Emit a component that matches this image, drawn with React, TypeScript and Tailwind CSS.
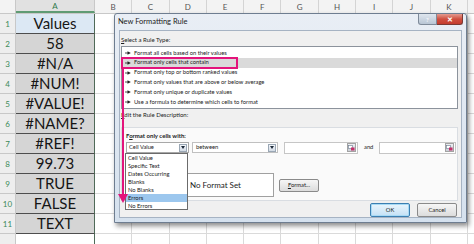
import React from 'react';

const sheetCols = ['B', 'C', 'D', 'E', 'F', 'G', 'H', 'I', 'J', 'K', ''];
const cellValues = ['Values', '58', '#N/A', '#NUM!', '#VALUE!', '#NAME?', '#REF!', '99.73', 'TRUE', 'FALSE', 'TEXT', ''];

const ruleTypes = [
    'Format all cells based on their values',
    'Format only cells that contain',
    'Format only top or bottom ranked values',
    'Format only values that are above or below average',
    'Format only unique or duplicate values',
    'Use a formula to determine which cells to format',
];

const dropOptions = ['Cell Value', 'Specific Text', 'Dates Occurring', 'Blanks', 'No Blanks', 'Errors', 'No Errors'];

const Bullet: React.FC = () => (
    <svg width="6" height="4" viewBox="0 0 6 4" className="shrink-0">
        <line x1="0" y1="2" x2="3" y2="2" stroke="#222" strokeWidth="0.8" />
        <polygon points="2.5,0.3 5.8,2 2.5,3.7" fill="#222" />
    </svg>
);

const DropArrow: React.FC = () => (
    <div className="w-[8px] h-[8px] my-auto mr-[1px] border border-[#9aa7b5] bg-gradient-to-b from-[#f2f5f9] to-[#d3dbe5] flex items-center justify-center">
        <svg width="4" height="3" viewBox="0 0 4 3">
            <polygon points="0,0 4,0 2,3" fill="#1d2a3a" />
        </svg>
    </div>
);

const PickerIcon: React.FC = () => (
    <div className="w-[9px] h-[9px] my-auto mr-[1px] border border-[#a3a3a3] bg-gradient-to-b from-[#eef0f3] to-[#c9ced6] flex items-center justify-center">
        <svg width="7" height="6" viewBox="0 0 7 6">
            <rect x="0.5" y="0.5" width="4" height="3" fill="#fff" stroke="#6a7a8f" strokeWidth="0.6" />
            <rect x="3" y="2.5" width="3.5" height="3" fill="#c2306a" />
        </svg>
    </div>
);

const Sheet: React.FC = () => (
    <div className="flex flex-col">
        {/* column headers */}
        <div className="flex h-[14px] bg-[#f3f3f3] border-b border-[#c8c8c8]">
            <div className="w-[16px] shrink-0 border-r border-[#c8c8c8]" />
            <div className="w-[79px] shrink-0 flex items-center justify-center bg-[#e1e1e1] border-r border-[#c8c8c8] border-b-2 border-b-[#5f9b74] text-[8px] text-[#2f7a4a]">A</div>
            {sheetCols.map((c, i) => (
                <div key={i} className="w-[37.3px] shrink-0 flex items-center justify-center border-r border-[#d4d4d4] text-[8px] text-[#555]">{c}</div>
            ))}
        </div>
        {/* rows */}
        {cellValues.map((v, i) => (
            <div key={i} className="flex h-[20px]">
                <div className="w-[16px] shrink-0 flex items-center justify-center bg-[#eeeeee] border-r border-b border-[#c8c8c8] text-[8px] text-[#3b8a59]">{i < 11 ? i + 1 : ''}</div>
                <div className={`w-[79px] shrink-0 flex items-center justify-center text-[15px] leading-none text-[#161616] border-r border-[#4f6a58] ${i === 11 ? 'bg-white border-b border-b-[#d9d9d9]' : 'border-b border-b-[#4d4d4d]'} ${i === 0 ? 'bg-[#dce8f4]' : i < 11 ? 'bg-[#d5d5d5]' : ''}`}>
                    {v}
                </div>
                {sheetCols.map((c, j) => (
                    <div key={j} className="w-[37.3px] shrink-0 border-r border-b border-[#dadada]" />
                ))}
            </div>
        ))}
    </div>
);

const FormattingDialog: React.FC = () => (
    <div className="absolute left-[114px] top-[13px] w-[353px] h-[210px] flex flex-col rounded-t-[3px] border border-[#6e7d90] bg-gradient-to-b from-[#e9eef5] to-[#d5e1ee] shadow-[2px_3px_5px_rgba(0,0,0,0.45)]">
        {/* title bar */}
        <div className="h-[17px] flex items-start justify-between pl-[3px]">
            <span className="mt-[4px] text-[7.5px] leading-[8px] text-[#1b1b1b]">New Formatting Rule</span>
            <div className="flex mr-[3px]">
                <div className="w-[19px] h-[11px] flex items-center justify-center rounded-bl-[3px] border border-t-0 border-[#7e8a99] bg-gradient-to-b from-[#dfe6ee] to-[#b9c6d5] text-[6px] font-bold text-[#f7f9fb]">?</div>
                <div className="w-[26px] h-[11px] flex items-center justify-center rounded-br-[3px] border border-t-0 border-l-0 border-[#7a3a34] bg-gradient-to-b from-[#e39a90] via-[#cf4f40] to-[#c43c2e] text-[7px] font-bold text-white">✕</div>
            </div>
        </div>

        {/* client area */}
        <div className="mx-[4px] mb-[4px] flex-1 flex flex-col bg-[#f0f0f0] border border-[#a6b3c3] pl-[1px] pr-[3px]">
            <div className="mt-[5px] h-[8px] text-[6px] leading-[8px] text-[#1b1b1b]"><span className="underline">S</span>elect a Rule Type:</div>
            <div className="mt-[2px] h-[63px] flex flex-col py-[1px] bg-white border border-[#8c939c]">
                {ruleTypes.map((r, i) => (
                    <div key={r} className={`h-[10px] flex items-center gap-[3px] pl-[3px] text-[5.8px] text-[#1b1b1b] ${i === 1 ? 'bg-[#dadada]' : ''}`}>
                        <Bullet />
                        <span>{r}</span>
                    </div>
                ))}
            </div>
            <div className="mt-[2px] h-[8px] text-[6px] leading-[8px] text-[#1b1b1b]"><span className="underline">E</span>dit the Rule Description:</div>

            <div className="mt-[8px] h-[74px] flex flex-col bg-[#fafafa] border border-[#d9dde2] pl-[4px]">
                <div className="mt-[4px] h-[8px] text-[6px] leading-[8px] font-bold text-[#1b1b1b]">F<span className="underline">o</span>rmat only cells with:</div>
                <div className="mt-[2px] h-[11px] flex items-center text-[5.8px] text-[#1b1b1b]">
                    <div className="w-[63px] h-[11px] flex justify-between items-center pl-[2px] bg-white border border-[#a8a8a8]">
                        <span>Cell Value</span>
                        <DropArrow />
                    </div>
                    <div className="ml-[3px] w-[86px] h-[11px] flex justify-between items-center pl-[3px] bg-white border border-[#c0c0c0]">
                        <span>between</span>
                        <DropArrow />
                    </div>
                    <div className="ml-[6px] w-[74px] h-[12px] flex justify-end bg-white border border-[#c6c6c6]">
                        <PickerIcon />
                    </div>
                    <span className="ml-[6px] w-[12px]">and</span>
                    <div className="ml-[3px] w-[77px] h-[12px] flex justify-end bg-white border border-[#c6c6c6]">
                        <PickerIcon />
                    </div>
                </div>
                <div className="mt-[20px] flex items-center">
                    <div className="ml-[31px] w-[117px] h-[24px] flex items-center justify-center bg-white border border-[#a0a0a0] text-[8px] text-[#1b1b1b]">No Format Set</div>
                    <div className="ml-[5px] w-[40px] h-[13px] flex items-center justify-center rounded-[2px] border border-[#8a8a8a] bg-gradient-to-b from-[#f6f6f6] to-[#dcdcdc] text-[5.8px] text-[#1b1b1b]">
                        <span><span className="underline">F</span>ormat...</span>
                    </div>
                </div>
            </div>

            <div className="mt-[2px] flex justify-end gap-[7px] pr-[1px]">
                <div className="w-[40px] h-[14px] flex items-center justify-center rounded-[2px] border border-[#3c7fb1] bg-gradient-to-b from-[#eaf5fc] to-[#c4e1f5] shadow-[inset_0_0_0_1px_#a8daf5] text-[5.8px] text-[#1b1b1b]">OK</div>
                <div className="w-[40px] h-[14px] flex items-center justify-center rounded-[2px] border border-[#8a8a8a] bg-gradient-to-b from-[#f6f6f6] to-[#dcdcdc] text-[5.8px] text-[#1b1b1b]">Cancel</div>
            </div>
        </div>
    </div>
);

const App: React.FC = () => {
    return (
        <div className="relative w-[474px] h-[244px] overflow-hidden bg-white" style={{ fontFamily: 'Lato, "Liberation Sans", sans-serif' }}>
            <Sheet />
            <FormattingDialog />

            {/* open dropdown list */}
            <div className="absolute left-[125px] top-[153px] w-[63px] h-[57px] flex flex-col bg-white border border-[#6b6b6b] text-[5.8px] text-[#1b1b1b]">
                {dropOptions.map((o) => (
                    <div key={o} className={`h-[8px] flex items-center pl-[2px] ${o === 'Errors' ? 'bg-[#9cc7ee]' : ''}`}>{o}</div>
                ))}
            </div>

            {/* pink annotation */}
            <div className="absolute left-[121px] top-[57px] w-[117px] h-[12px] border-2 border-[#e3147b]" />
            <div className="absolute left-[122px] top-[68px] w-[2px] h-[128px] bg-[#e3147b]" />
            <svg className="absolute left-[118px] top-[194px]" width="10" height="9" viewBox="0 0 10 9">
                <polygon points="0,0 10,0 5,9" fill="#e3147b" />
            </svg>
        </div>
    );
};

export default App;
